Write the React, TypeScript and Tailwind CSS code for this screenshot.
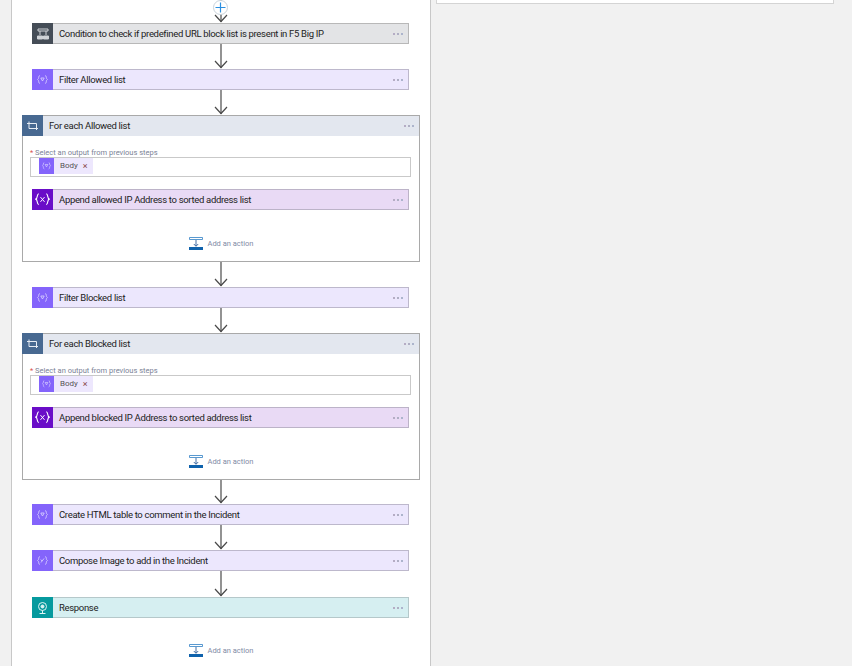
import type { ReactNode } from 'react';

const font = { fontFamily: 'Roboto, "Liberation Sans", sans-serif' };

function Connector({ height = 25 }: { height?: number }) {
  return (
    <svg width="16" height={height} viewBox={`0 0 16 ${height}`} className="block mx-auto shrink-0" fill="none" stroke="#4a4a4a">
      <path d={`M8 0V${height - 1}`} strokeWidth="1.2" />
      <path d={`M2 ${height - 8}L8 ${height - 1.5}L14 ${height - 8}`} strokeWidth="1.2" />
    </svg>
  );
}

function Dots() {
  return (
    <span className="flex gap-[2px]">
      <span className="w-[2px] h-[2px] bg-[#b5acc4]" />
      <span className="w-[2px] h-[2px] bg-[#afafc4]" />
      <span className="w-[2px] h-[2px] bg-[#acb4cc]" />
    </span>
  );
}

function Braces({ children, color = '#ddd5ff', size = 11 }: { children?: ReactNode; color?: string; size?: number }) {
  return (
    <svg width={size} height={(size * 9) / 11} viewBox="0 0 11 9" fill="none" stroke={color} strokeWidth="0.8">
      <path d="M2.8 0.5C1.2 0.5 2.2 4 0.6 4.5C2.2 5 1.2 8.5 2.8 8.5M8.2 0.5C9.8 0.5 8.8 4 10.4 4.5C8.8 5 9.8 8.5 8.2 8.5" />
      {children}
    </svg>
  );
}

function ConditionIcon() {
  return (
    <svg width="12" height="12" viewBox="0 0 12 12" fill="none" stroke="#cfd2d6" strokeWidth="1">
      <path d="M1 1H11V3H9V7M1 1V3H3V7M3 3H9" />
      <path d="M0.5 8h5v3h-5zM6.5 8h5v3h-5z" fill="#cfd2d6" />
    </svg>
  );
}

function FilterIcon() {
  return (
    <Braces>
      <path d="M3.8 3H7.2L5.5 6Z" />
    </Braces>
  );
}

function ComposeIcon() {
  return (
    <Braces>
      <path d="M4 6.5L7 2.5M3.8 3.5L5 5" />
    </Braces>
  );
}

function VariableIcon() {
  return (
    <Braces color="#ffffff" size={15}>
      <path d="M4 3L7 6.5M7 3L4 6.5" strokeWidth="0.7" />
    </Braces>
  );
}

function LoopIcon() {
  return (
    <svg width="11" height="10" viewBox="0 0 11 10" fill="none" stroke="#e8edf4" strokeWidth="1">
      <path d="M0 2.5H9.5V9M2 0.5V7.5H11" />
    </svg>
  );
}

function ResponseIcon() {
  return (
    <svg width="11" height="12" viewBox="0 0 11 12" fill="none" stroke="#dff5f5" strokeWidth="1">
      <circle cx="5.5" cy="4.5" r="4" />
      <circle cx="5.5" cy="4.5" r="1.5" fill="#dff5f5" />
      <path d="M2.5 11.5H8.5M5.5 8.5V11.5" />
    </svg>
  );
}

function Step({ title, icon, iconBg, bg, border, margin = 'ml-2.5 mr-[11px]' }: { title: string; icon: ReactNode; iconBg: string; bg: string; border: string; margin?: string }) {
  return (
    <div className={`${margin} h-[21px] flex items-center border ${border} ${bg} shrink-0`}>
      <div className={`w-[21px] h-[21px] -my-px -ml-px flex items-center justify-center shrink-0 ${iconBg}`}>{icon}</div>
      <span className="ml-[6px] pt-px flex-1 text-[9.5px] tracking-[-0.32px] text-[#222] whitespace-nowrap">{title}</span>
      <span className="mr-[5px] flex"><Dots /></span>
    </div>
  );
}

function AddAction({ className = '' }: { className?: string }) {
  return (
    <div className={`flex items-center justify-center gap-[5px] ${className}`}>
      <svg width="14" height="13" viewBox="0 0 14 13" fill="none">
        <path d="M0.5 0.5H13.5V2.5H0.5Z" stroke="#2f7fc4" strokeWidth="0.8" />
        <path d="M7 3V9M4.8 7L7 9.3L9.2 7" stroke="#2f5f9a" strokeWidth="0.9" />
        <rect x="0" y="10" width="14" height="3" fill="#0f62ac" />
      </svg>
      <span className="text-[7.5px] text-[#7f8ba6] whitespace-nowrap">Add an action</span>
    </div>
  );
}

function ForEach({ title, stepTitle }: { title: string; stepTitle: string }) {
  return (
    <div className="h-[147px] border border-[#a9a9a9] bg-white flex flex-col shrink-0">
      <div className="h-5 flex items-center bg-[#e3e7ef] shrink-0">
        <div className="w-[21px] h-[21px] -ml-px -mt-px flex items-center justify-center bg-[#486991]"><LoopIcon /></div>
        <span className="ml-[6px] pt-px flex-1 text-[9.5px] tracking-[-0.32px] text-[#222]">{title}</span>
        <span className="mr-[5px] flex"><Dots /></span>
      </div>
      <div className="mt-3 ml-[7px] text-[7.5px] leading-[9px] text-[#7a8296] whitespace-nowrap">
        <span className="text-[#d9534f]">* </span>Select an output from previous steps
      </div>
      <div className="ml-[7px] mr-2 h-5 border border-[#c9c9c9] flex items-start pl-[8px] shrink-0">
        <div className="h-4 flex items-center bg-[#ede7fd] pr-[5px]">
          <div className="w-[15px] h-4 flex items-center justify-center bg-[#8464fb]">
            <Braces size={9}>
              <path d="M3.8 3H7.2L5.5 6Z" />
            </Braces>
          </div>
          <span className="ml-1.5 text-[8px] text-[#555]">Body</span>
          <span className="ml-[5px] text-[9px] leading-none text-[#8a4a4a]">×</span>
        </div>
      </div>
      <div className="mt-3">
        <Step title={stepTitle} icon={<VariableIcon />} iconBg="bg-[#6a0dc8]" bg="bg-[#e9daf5]" border="border-[#bcb3c8]" margin="ml-[9px] mr-[10px]" />
      </div>
      <AddAction className="mt-[27px]" />
    </div>
  );
}

export default function App() {
  const filterBg = 'bg-[#ece7fd]';
  const filterBorder = 'border-[#bdb8cc]';
  return (
    <div className="w-[852px] h-[666px] overflow-hidden bg-[#f1f1f1] flex" style={font}>
      <div className="ml-[11px] w-[420px] h-full bg-white border-x border-[#c8c8c8] px-[10px] flex flex-col shrink-0">
        <div className="relative h-[23px] shrink-0">
          <Connector height={23} />
          <div className="absolute left-[191px] top-0 w-[15px] h-[15px] rounded-full bg-white border border-[#c9d3dc] flex items-center justify-center">
            <svg width="11" height="11" viewBox="0 0 11 11" stroke="#2b8fe0" strokeWidth="1.2"><path d="M5.5 0.5V10.5M0.5 5.5H10.5" /></svg>
          </div>
        </div>
        <Step title="Condition to check if predefined URL block list is present in F5 Big IP" icon={<ConditionIcon />} iconBg="bg-[#454d57]" bg="bg-[#e3e4e6]" border="border-[#b8b8b8]" />
        <Connector />
        <Step title="Filter Allowed list" icon={<FilterIcon />} iconBg="bg-[#8464fb]" bg={filterBg} border={filterBorder} />
        <Connector />
        <ForEach title="For each Allowed list" stepTitle="Append allowed IP Address to sorted address list" />
        <Connector />
        <Step title="Filter Blocked list" icon={<FilterIcon />} iconBg="bg-[#8464fb]" bg={filterBg} border={filterBorder} />
        <Connector />
        <ForEach title="For each Blocked list" stepTitle="Append blocked IP Address to sorted address list" />
        <Connector height={24} />
        <Step title="Create HTML table to comment in the Incident" icon={<FilterIcon />} iconBg="bg-[#8464fb]" bg={filterBg} border={filterBorder} />
        <Connector />
        <Step title="Compose Image to add in the Incident" icon={<ComposeIcon />} iconBg="bg-[#8464fb]" bg={filterBg} border={filterBorder} />
        <Connector height={26} />
        <Step title="Response" icon={<ResponseIcon />} iconBg="bg-[#069a9e]" bg="bg-[#d6eff1]" border="border-[#b5c8ca]" />
        <AddAction className="mt-[26px]" />
      </div>
      <div className="ml-[5px] w-[398px] h-[4px] bg-white border border-t-0 border-[#d4d4d4] shrink-0" />
    </div>
  );
}
